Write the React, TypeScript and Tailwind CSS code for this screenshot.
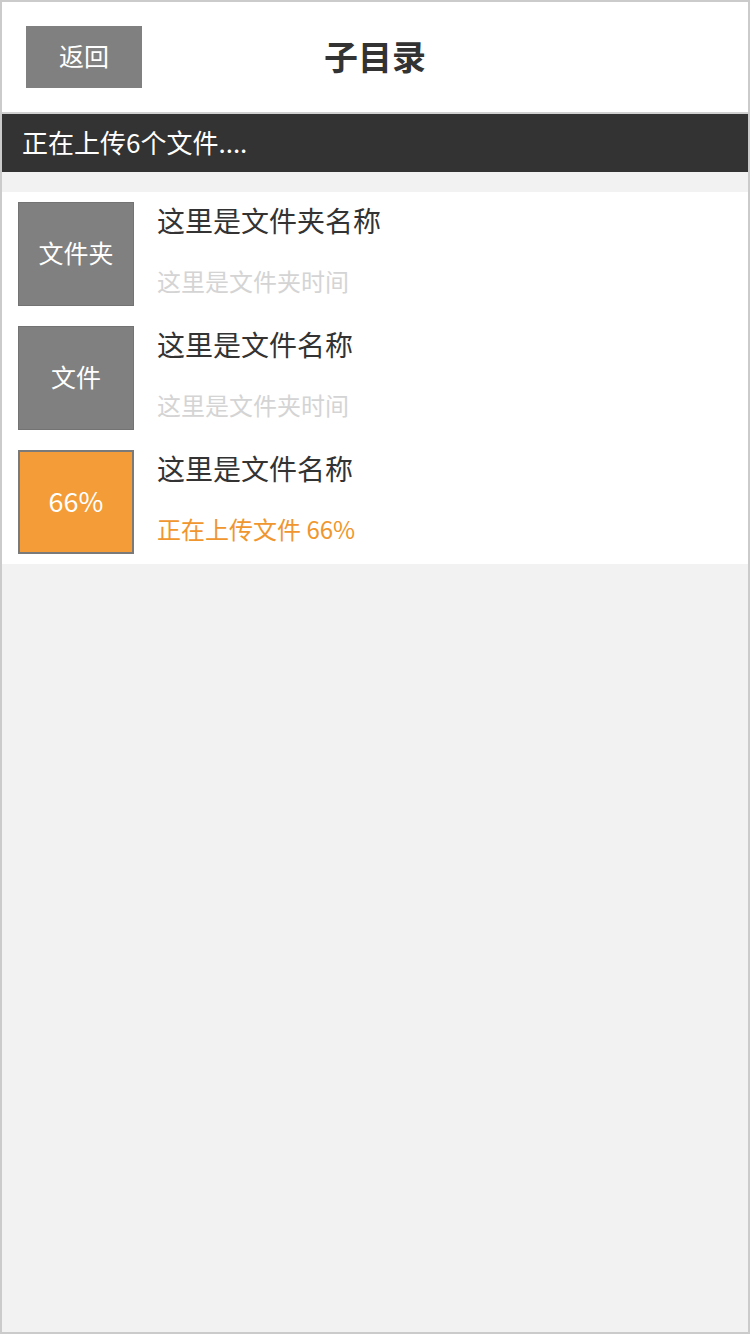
const cjk = { fontFamily: '"Noto Sans CJK SC", "Liberation Sans", sans-serif' }

type Item = {
  thumb: string
  name: string
  sub: string
  uploading?: boolean
}

const items: Item[] = [
  { thumb: '文件夹', name: '这里是文件夹名称', sub: '这里是文件夹时间' },
  { thumb: '文件', name: '这里是文件名称', sub: '这里是文件夹时间' },
  { thumb: '66%', name: '这里是文件名称', sub: '正在上传文件 66%', uploading: true },
]

function Row({ item }: { item: Item }) {
  return (
    <div className="flex py-[10px] pl-4">
      <div
        className={
          item.uploading
            ? 'flex h-[104px] w-[116px] shrink-0 items-center justify-center border-2 border-[#7a7a7a] bg-[#f49c37] pb-0.5 text-[27px] text-white'
            : 'flex h-[104px] w-[116px] shrink-0 items-center justify-center border border-[#737373] bg-[#808080] pb-0.5 text-[25px] text-white'
        }
      >
        {item.thumb}
      </div>
      <div className="ml-[23px] flex flex-col">
        <div className="-mt-0.5 text-[28px] leading-[40px] text-[#333]">{item.name}</div>
        <div
          className={
            item.uploading
              ? 'mt-[22px] text-[24px] leading-[38px] text-[#f0962f]'
              : 'mt-[22px] text-[24px] leading-[38px] text-[#d4d4d4]'
          }
        >
          {item.sub}
        </div>
      </div>
    </div>
  )
}

export default function App() {
  return (
    <div className="flex h-[1334px] w-[750px] flex-col border-2 border-[#cbcbcb] bg-[#f2f2f2]" style={cjk}>
      <header className="relative flex h-[112px] shrink-0 items-center border-b-2 border-[#d0d0d0] bg-white">
        <button className="ml-6 flex h-[62px] w-[116px] items-center justify-center bg-[#808080] pb-0.5 text-[25px] text-white">
          返回
        </button>
        <h1 className="pointer-events-none absolute left-0 right-0 -mt-1 text-center text-[34px] font-bold text-[#333]">
          子目录
        </h1>
      </header>
      <div className="flex h-[58px] shrink-0 items-center bg-[#333] pb-1 pl-5 text-[26px] text-white">
        正在上传6个文件....
      </div>
      <div className="mt-5 bg-white">
        {items.map((it, i) => (
          <Row key={i} item={it} />
        ))}
      </div>
    </div>
  )
}
